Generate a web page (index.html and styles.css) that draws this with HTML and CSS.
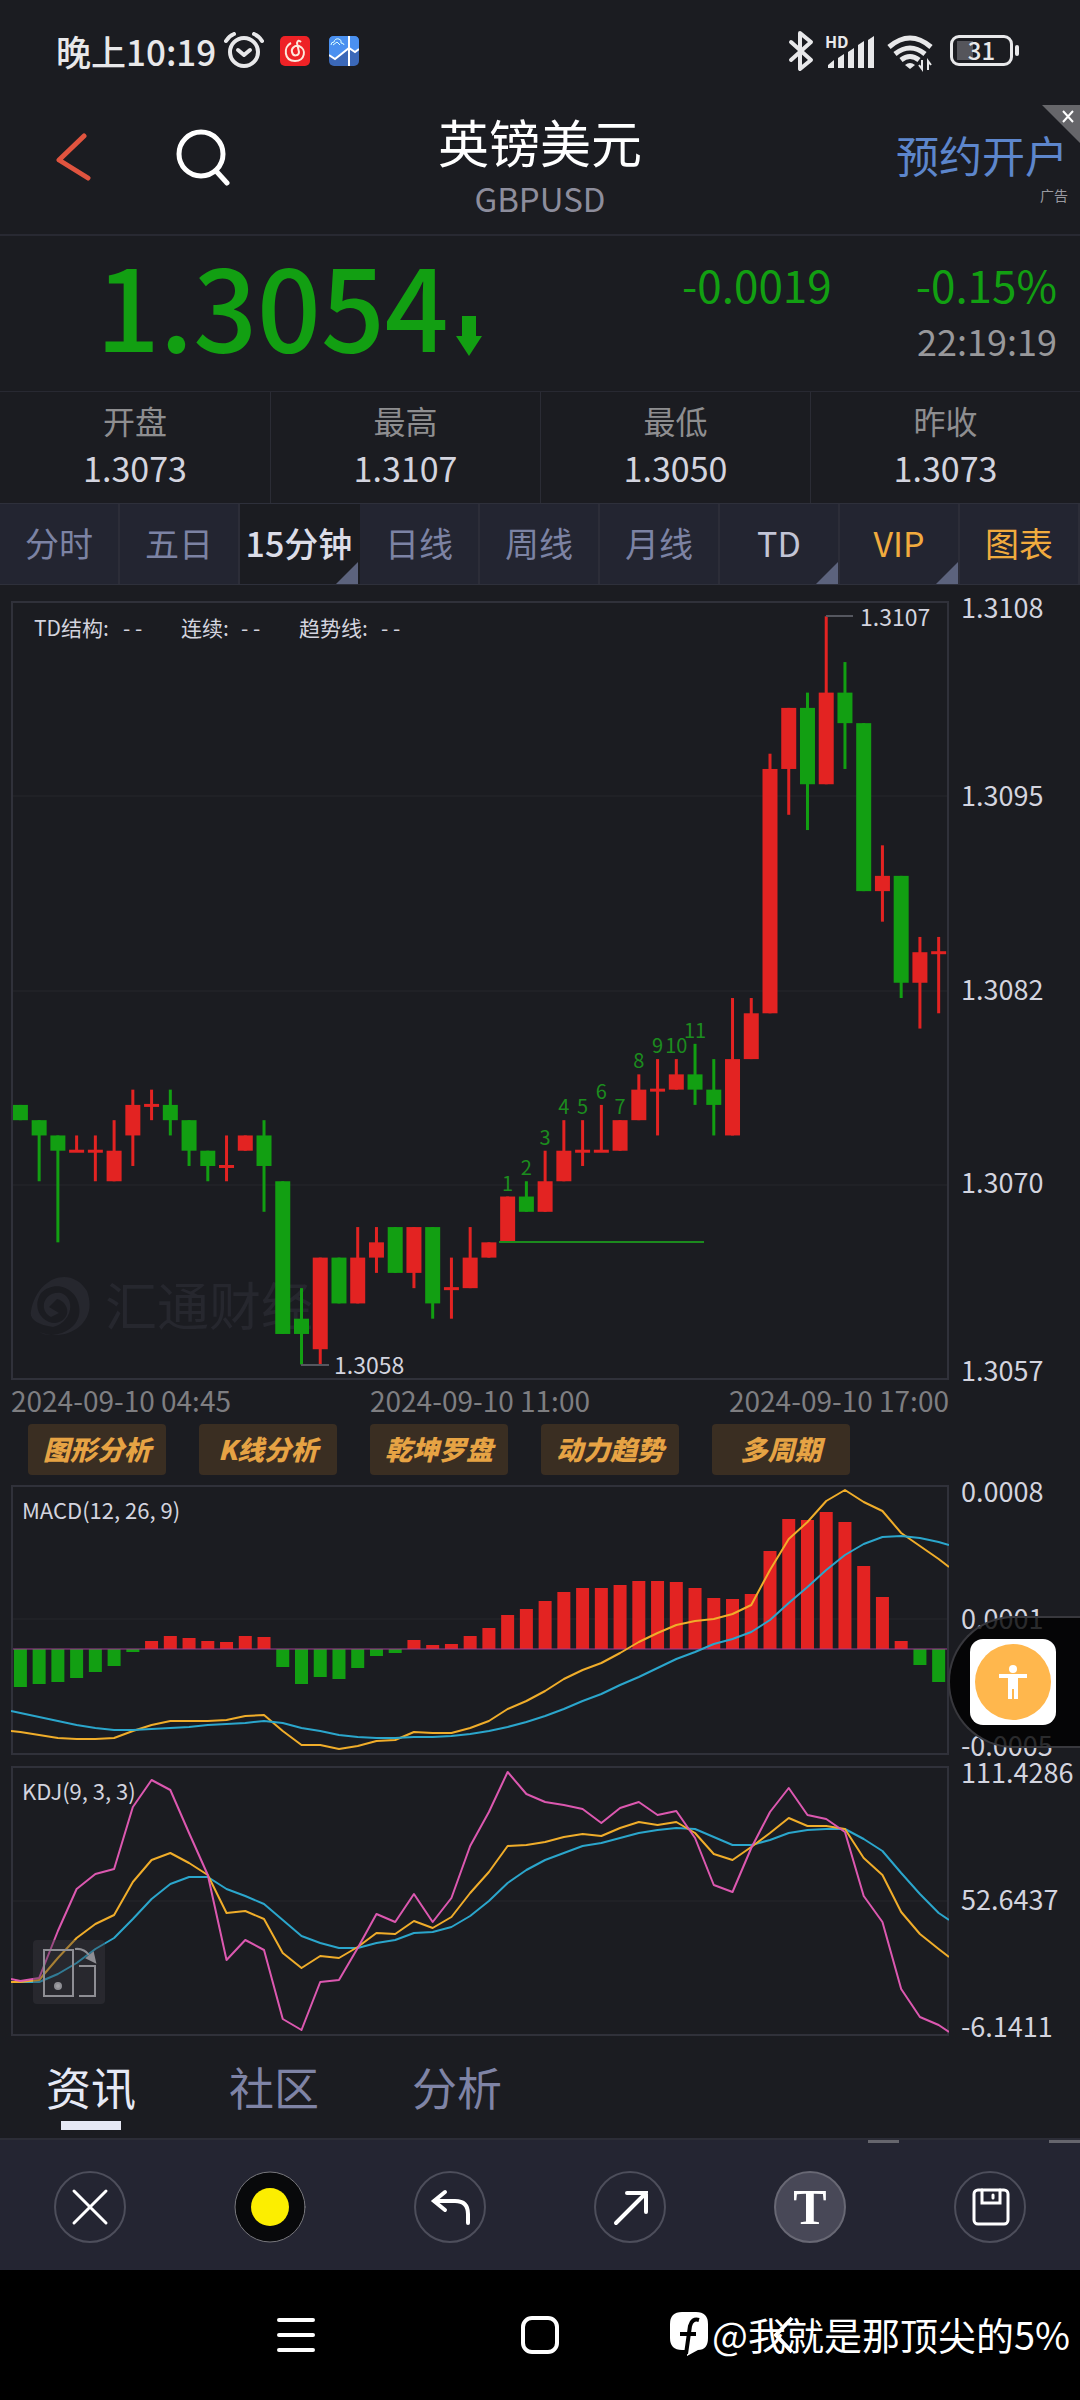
FILE: index.html
```html
<!DOCTYPE html>
<html lang="zh-CN">
<head>
    <meta charset="UTF-8">
    <meta name="viewport" content="width=device-width, initial-scale=1.0">
    <title>英镑美元 GBPUSD</title>
    <link rel="stylesheet" href="styles.css">
</head>
<body>
    <div class="status-bar">
        <div class="status-left">
            <span class="clock">晚上10:19</span>
            <svg class="alarm" width="40" height="38" viewBox="0 0 40 38" fill="none" stroke="#e8e8ea" stroke-linecap="round">
                <circle cx="20" cy="20" r="14" stroke-width="4"/>
                <path d="M14 18l6 5 6-5" stroke-width="4" stroke-linejoin="round"/>
                <path d="M2 9q3-5 8-7M38 9q-3-5-8-7" stroke-width="4"/>
            </svg>
            <svg width="30" height="30" viewBox="0 0 30 30">
                <rect width="30" height="30" rx="5" fill="#ee2226"/>
                <path d="M11 7C3 11 4 25 15 25c10 0 12-12 4-15-5-1-8 3-7 6 1 5 7 4 7 0l-2-9q1-4 4-1" fill="none" stroke="#fde9dd" stroke-width="2"/>
            </svg>
            <svg class="map-app" width="30" height="30" viewBox="0 0 30 30">
                <rect width="30" height="30" rx="5" fill="#3b68b8"/>
                <path d="M0 19l6 4L20 12l6 4 4-3V5q0-5-5-5H5Q0 0 0 5z" fill="#4a90f0"/>
                <path d="M0 19l6 4L20 12l6 4 4-3M20 0v30" fill="none" stroke="#fff" stroke-width="2"/>
                <path d="M2 9q0-3 3-3 1-4 5-3 3 1 2 4 3 0 3 2M4 9l4-3 3 3" fill="none" stroke="#dff" stroke-width="1"/>
            </svg>
        </div>
        <div class="status-right">
            <svg width="148" height="42" viewBox="0 0 148 42" fill="#e8e8ea">
                <path d="M3 12l20 18-11 9V3l11 9L3 30" fill="none" stroke="#e8e8ea" stroke-width="4" stroke-linejoin="round" stroke-linecap="round"/>
                <text x="37" y="18" font-size="16" font-weight="700">HD</text>
                <path d="M40 38v-3l6-5v8zM50 38V28l6-4v14zM60 38V22l6-4v20zM70 38V15l6-4v27zM80 38V10l6-4v32z"/>
                <path d="M101 17q21-18 42 0M107 24q15-12 30 0M113 30q9-7 18 0" fill="none" stroke="#e8e8ea" stroke-width="5"/>
                <path d="M122 39l-5-4q5-4 10 0z"/>
                <path d="M134 30v9l-3-4M140 40v-9l3 4" fill="none" stroke="#e8e8ea" stroke-width="2"/>
            </svg>
            <div class="battery"><span>31</span></div>
        </div>
    </div>

    <header class="header">
        <div class="header-left">
            <button type="button" aria-label="返回">
                <svg width="36" height="50" viewBox="0 0 36 50" fill="none" stroke="#e0543f" stroke-width="5" stroke-linecap="round" stroke-linejoin="round">
                    <path d="M29 4L4 28l29 18"/>
                </svg>
            </button>
            <button type="button" aria-label="搜索">
                <svg width="56" height="58" viewBox="0 0 56 58" fill="none" stroke="#fff" stroke-width="5" stroke-linecap="round">
                    <circle cx="25" cy="26" r="22"/>
                    <path d="M41 44l10 11"/>
                </svg>
            </button>
        </div>
        <div class="title">
            <h1>英镑美元</h1>
            <p>GBPUSD</p>
        </div>
        <div class="header-right">
            <a href="#open">预约开户</a>
            <small>广告</small>
        </div>
        <button type="button" class="ad-close" aria-label="关闭广告">
            <svg width="38" height="38" viewBox="0 0 38 38">
                <path d="M0 0h38v38z" fill="#66666a"/>
                <path d="M21 6l10 11M31 6L21 17" stroke="#fff" stroke-width="2"/>
            </svg>
        </button>
    </header>

    <section class="quote">
        <div class="price">
            <span>1.3054</span>
            <svg width="28" height="42" viewBox="0 0 28 42"><path d="M7 1h14v20h6L14 41 1 21h6z" fill="#129f12"/></svg>
        </div>
        <div class="change">
            <div class="change-row"><span>-0.0019</span><span>-0.15%</span></div>
            <time>22:19:19</time>
        </div>
    </section>

    <dl class="stats">
        <div><dt>开盘</dt><dd>1.3073</dd></div>
        <div><dt>最高</dt><dd>1.3107</dd></div>
        <div><dt>最低</dt><dd>1.3050</dd></div>
        <div><dt>昨收</dt><dd>1.3073</dd></div>
    </dl>

    <nav class="periods">
        <button type="button">分时</button>
        <button type="button">五日</button>
        <button type="button" class="active more">15分钟</button>
        <button type="button">日线</button>
        <button type="button">周线</button>
        <button type="button">月线</button>
        <button type="button" class="light more">TD</button>
        <button type="button" class="gold more">VIP</button>
        <button type="button" class="gold">图表</button>
    </nav>

    <main class="charts">
        <div class="chart-row">
            <svg class="chart" id="kline" viewBox="0 0 938 779">
                <path class="grid-line" d="M0 195H938M0 390H938M0 584H938"/>
                <g fill="#26272e">
                    <path d="M20 710C26 676 60 664 76 690 88 722 56 742 28 731 40 738 64 732 68 714 72 690 46 676 30 692 20 708 32 722 44 722 60 720 60 702 46 698L38 706 48 712 40 716C26 708 34 690 50 692 66 698 60 722 42 726 26 724 18 718 20 710z"/>
                    <text x="94" y="725" font-size="52">汇通财经</text>
                </g>
                <g class="legend">
                    <text x="23" y="35">TD结构:</text><text x="112" y="35">- -</text>
                    <text x="170" y="35">连续:</text><text x="230" y="35">- -</text>
                    <text x="288" y="35">趋势线:</text><text x="370" y="35">- -</text>
                </g>
                <g id="candles"></g>
                <path d="M488 641H693" stroke="#1c8a1e" stroke-width="2"/>
                <path d="M815 15H842M290 764H318" stroke="#55575f" stroke-width="2"/>
                <text class="mark" x="849" y="25">1.3107</text>
                <text class="mark" x="323" y="773">1.3058</text>
                <rect class="frame" x="1" y="1" width="936" height="777"/>
            </svg>
            <div class="axis axis-5">
                <span>1.3108</span><span>1.3095</span><span>1.3082</span><span>1.3070</span><span>1.3057</span>
            </div>
        </div>
        <div class="dates">
            <span>2024-09-10 04:45</span><span>2024-09-10 11:00</span><span>2024-09-10 17:00</span>
        </div>
        <div class="tags">
            <button type="button">图形分析</button>
            <button type="button">K线分析</button>
            <button type="button">乾坤罗盘</button>
            <button type="button">动力趋势</button>
            <button type="button">多周期</button>
        </div>
        <div class="chart-row macd-row">
            <svg class="chart" id="macd" viewBox="0 0 938 270">
                <path class="grid-line" d="M0 134H938"/>
                <g id="bars"></g>
                <path d="M0 164H938" stroke="#a03c94" stroke-width="1"/>
                <text class="name" x="11" y="34">MACD(12, 26, 9)</text>
                <rect class="frame" x="1" y="1" width="936" height="268"/>
            </svg>
            <div class="axis axis-3"><span>0.0008</span><span>0.0001</span><span>-0.0005</span></div>
            <button type="button" class="assist" aria-label="辅助功能">
                <svg width="86" height="86" viewBox="0 0 86 86">
                    <rect width="86" height="86" rx="13" fill="#fff"/>
                    <circle cx="43" cy="43" r="38" fill="#ffb74d"/>
                    <circle cx="43" cy="30" r="4" fill="#fff"/>
                    <path d="M29 35h28v4h-9v21h-4V50h-2v10h-4V39h-9z" fill="#fff"/>
                </svg>
            </button>
        </div>
        <div class="chart-row kdj-row">
            <svg class="chart" id="kdj" viewBox="0 0 938 270">
                <path class="grid-line" d="M0 135H938"/>
                <text class="name" x="11" y="34">KDJ(9, 3, 3)</text>
                <rect class="frame" x="1" y="1" width="936" height="268"/>
            </svg>
            <div class="axis axis-3"><span>111.4286</span><span>52.6437</span><span>-6.1411</span></div>
            <button type="button" class="rotate" aria-label="横屏">
                <svg width="72" height="64" viewBox="0 0 72 64" fill="none" stroke="#8e8e94" stroke-width="2">
                    <path d="M11 10h29v46H11zM46 26h16v30H46M42 9q9-1 14 6"/>
                    <circle cx="25" cy="46" r="3" fill="#a0a0a5"/>
                    <path d="M54 18l6-5 2 9z" fill="#8e8e94"/>
                </svg>
            </button>
        </div>
    </main>

    <nav class="news-tabs">
        <a href="#news" class="active">资讯</a>
        <a href="#community">社区</a>
        <a href="#analysis">分析</a>
    </nav>

    <div class="toolbar">
        <button type="button" aria-label="关闭">
            <svg viewBox="0 0 72 72"><circle class="ring" cx="36" cy="36" r="35"/><path d="M20 20l32 32M52 20L20 52" stroke-width="3"/></svg>
        </button>
        <button type="button" aria-label="颜色">
            <svg viewBox="0 0 72 72"><circle cx="36" cy="36" r="35" fill="#08090b" stroke="#77777c" stroke-width="1"/><circle cx="36" cy="36" r="19" fill="#fcee00" stroke="none"/></svg>
        </button>
        <button type="button" aria-label="撤销">
            <svg viewBox="0 0 72 72"><circle class="ring" cx="36" cy="36" r="35"/><path d="M31 21L20 30l11 9M21 30h20q13 0 13 13v9" stroke-width="4"/></svg>
        </button>
        <button type="button" aria-label="箭头">
            <svg viewBox="0 0 72 72"><circle class="ring" cx="36" cy="36" r="35"/><path d="M22 52l30-30M33 22h19v19" stroke-width="4"/></svg>
        </button>
        <button type="button" aria-label="文字">
            <svg viewBox="0 0 72 72"><circle cx="36" cy="36" r="35" fill="#484857" stroke="#686874" stroke-width="2"/><text x="36" y="53" text-anchor="middle" class="letter">T</text></svg>
        </button>
        <button type="button" aria-label="保存">
            <svg viewBox="0 0 72 72"><circle class="ring" cx="36" cy="36" r="35"/><rect x="20" y="19" width="34" height="34" rx="4" stroke-width="3"/><path d="M28 19v13h18V19M39 24v3" stroke-width="3"/></svg>
        </button>
        <i class="handle handle-left"></i>
        <i class="handle"></i>
    </div>

    <footer class="system-nav">
        <button type="button" aria-label="最近任务">
            <svg width="38" height="38" viewBox="0 0 38 38" stroke="#fff" stroke-width="4" stroke-linecap="round"><path d="M2 4h34M2 19h34M2 34h34"/></svg>
        </button>
        <button type="button" aria-label="主页">
            <svg width="38" height="38" viewBox="0 0 38 38" fill="none" stroke="#fff" stroke-width="4"><rect x="2" y="2" width="34" height="34" rx="9"/></svg>
        </button>
        <button type="button" aria-label="后退">
            <svg width="38" height="38" viewBox="0 0 38 38" fill="none" stroke="#fff" stroke-width="4"><path d="M27 2L11 19l16 17"/></svg>
        </button>
        <div class="author">
            <svg width="38" height="44" viewBox="0 0 38 44">
                <path d="M12 0h14q12 0 12 12v14q0 12-10 12l-11 6v-6h-5Q0 38 0 26V12Q0 0 12 0z" fill="#fff"/>
                <path d="M29 8q-7-2-9 6l-4 28M10 22h16" fill="none" stroke="#000" stroke-width="4"/>
            </svg>
            <span>@我就是那顶尖的5%</span>
        </div>
    </footer>
    <script src="chart.js"></script>
</body>
</html>
```

FILE: styles.css
```css
* {
    box-sizing: border-box;
}
body {
    margin: 0;
    background: #1b1c21;
    color: #d3d4df;
    font-family: "Noto Sans CJK SC", "Noto Sans", sans-serif;
    font-size: 27px;
}
h1, p, dl, dd {
    margin: 0;
}
button {
    padding: 0;
    border: 0;
    background: none;
    color: inherit;
    font: inherit;
}
a {
    text-decoration: none;
}
svg {
    display: block;
}

/* status bar */
.status-bar {
    display: flex;
    justify-content: space-between;
    align-items: center;
    height: 105px;
    padding: 0 67px 4px 56px;
    color: #e8e8ea;
}
.status-left, .status-right {
    display: flex;
    align-items: center;
}
.clock {
    font-size: 35px;
    font-weight: 500;
}
.alarm {
    margin: 0 16px 0 8px;
}
.map-app {
    margin-left: 19px;
}
.battery {
    position: relative;
    width: 63px;
    height: 31px;
    margin-left: 14px;
    border: 3px solid #e8e8ea;
    border-radius: 9px;
    background: linear-gradient(#55555b, #55555b) 4px 3px / 16px 19px no-repeat;
    font-size: 24px;
    font-weight: 500;
    line-height: 24px;
    text-align: center;
}
.battery::after {
    content: "";
    position: absolute;
    top: 7px;
    right: -9px;
    width: 4px;
    height: 11px;
    border-radius: 2px;
    background: #e8e8ea;
}

/* header */
.header {
    position: relative;
    display: grid;
    grid-template-columns: 1fr auto 1fr;
    height: 131px;
    border-bottom: 2px solid #282932;
}
.header-left {
    display: flex;
    align-items: center;
    gap: 85px;
    padding: 0 0 26px 55px;
}
.title {
    padding-top: 5px;
    text-align: center;
}
.title h1 {
    color: #fff;
    font-size: 51px;
    font-weight: 400;
    line-height: 62px;
}
.title p {
    color: #8d8d9c;
    font-size: 33px;
    line-height: 52px;
}
.header-right {
    display: flex;
    flex-direction: column;
    align-items: flex-end;
    padding: 20px 12px 0 0;
}
.header-right a {
    color: #5d86cc;
    font-size: 43px;
    line-height: 58px;
}
.header-right small {
    color: #9a9aa0;
    font-size: 14px;
    line-height: 24px;
}
.ad-close {
    position: absolute;
    top: 0;
    right: 0;
}

/* quote */
.quote {
    display: flex;
    justify-content: space-between;
    height: 155px;
    padding: 0 23px 0 96px;
    color: #129f12;
}
.price {
    display: flex;
    align-items: flex-end;
    gap: 6px;
    padding-bottom: 34px;
    font-size: 112px;
    font-weight: 500;
    line-height: 108px;
}
.change {
    padding-top: 19px;
    font-size: 44px;
    line-height: 58px;
    text-align: right;
}
.change-row {
    display: flex;
    gap: 84px;
}
.change time {
    display: block;
    color: #98989b;
    font-size: 36px;
    line-height: 54px;
}

/* open / high / low / close */
.stats {
    display: grid;
    grid-template-columns: repeat(4, 1fr);
    height: 112px;
    border-top: 1px solid #282932;
    text-align: center;
}
.stats div {
    padding-top: 4px;
}
.stats div + div {
    border-left: 1px solid #2b2c35;
}
.stats dt {
    color: #8e8e90;
    font-size: 32px;
    line-height: 48px;
}
.stats dd {
    font-size: 34px;
    line-height: 48px;
}

/* period tabs */
.periods {
    display: grid;
    grid-template-columns: repeat(9, 1fr);
    height: 82px;
    border-top: 1px solid #2e303b;
    border-bottom: 1px solid #2e303b;
}
.periods button {
    position: relative;
    padding-bottom: 3px;
    border-right: 2px solid #2c2d38;
    background: #232531;
    color: #7c83a4;
    font-size: 34px;
    white-space: nowrap;
}
.periods .active {
    border-color: #1b1c21;
    background: #1b1c21;
    color: #dcdde8;
    font-weight: 500;
}
.periods .light {
    color: #c3c5d6;
}
.periods .gold {
    color: #f1ab3e;
}
.periods .more::after {
    content: "";
    position: absolute;
    right: 0;
    bottom: 0;
    border-left: 22px solid transparent;
    border-bottom: 22px solid #5c637d;
}

/* charts */
.charts {
    padding: 16px 0 0 11px;
}
.chart-row {
    position: relative;
    display: grid;
    grid-template-columns: minmax(0, 1fr) 131px;
}
.chart {
    width: 100%;
}
.chart text {
    fill: currentColor;
}
.chart g[fill] text {
    fill: #26272e;
}
.frame {
    fill: none;
    stroke: #30313a;
    stroke-width: 2;
}
.grid-line {
    stroke: #26272d;
}
.legend {
    font-size: 21px;
}
.mark {
    font-size: 23px;
}
.name {
    font-size: 22px;
}
.chart .td-count {
    fill: #1c8c1e;
    font-size: 20px;
    text-anchor: middle;
}
.up {
    fill: #e32322;
}
.down {
    fill: #129f12;
}
.line {
    fill: none;
    stroke-width: 2;
    stroke-linejoin: round;
}
.yellow {
    stroke: #f0ad2a;
}
.blue {
    stroke: #2ba6cc;
}
.pink {
    stroke: #dc58b0;
}
.axis {
    display: grid;
    align-items: center;
    padding: 0 0 4px 12px;
    line-height: 12px;
}
.axis-5 {
    grid-template-rows: 1fr 2fr 2fr 2fr 1fr;
}
.axis-3 {
    grid-template-rows: 1fr 2fr 1fr;
}
.axis span:first-child {
    align-self: start;
}
.axis span:last-child {
    align-self: end;
}
.dates {
    display: flex;
    justify-content: space-between;
    margin-right: 131px;
    color: #7e7e81;
    font-size: 28px;
    line-height: 40px;
}
.tags {
    display: flex;
    gap: 33px;
    padding: 4px 0 10px 17px;
}
.tags button {
    width: 138px;
    height: 51px;
    padding-bottom: 2px;
    border-radius: 4px;
    background: #3a2e22;
    color: #e6a344;
    font-size: 27px;
    font-style: italic;
    font-weight: 900;
}
.kdj-row {
    margin-top: 11px;
}
.assist {
    position: absolute;
    top: 131px;
    right: 0;
    width: 132px;
    height: 132px;
    padding-left: 20px;
    border: 2px solid #38383d;
    border-right: 0;
    border-radius: 66px 0 0 66px;
    background: rgba(0, 0, 0, 0.8);
}
.rotate {
    position: absolute;
    top: 174px;
    left: 22px;
    border-radius: 4px;
    background: rgba(60, 60, 68, 0.4);
}

/* news tabs */
.news-tabs {
    display: flex;
    gap: 93px;
    height: 102px;
    padding: 20px 46px 0;
    font-size: 45px;
    line-height: 62px;
}
.news-tabs a {
    color: #7f84a6;
}
.news-tabs .active {
    color: #e6e9f5;
}
.news-tabs .active::after {
    content: "";
    display: block;
    width: 60px;
    height: 9px;
    margin: 3px auto 0;
    background: #e6e9f5;
}

/* drawing tools */
.toolbar {
    position: relative;
    display: grid;
    grid-template-columns: repeat(6, 1fr);
    place-items: center;
    height: 132px;
    padding-top: 4px;
    border-top: 2px solid #2c2d37;
    background: #242532;
}
.toolbar svg {
    width: 72px;
    height: 72px;
    fill: none;
    stroke: #fff;
    stroke-linecap: round;
}
.toolbar .ring {
    stroke: #4d4e5b;
    stroke-width: 2;
}
.toolbar .letter {
    fill: #fff;
    stroke: none;
    font-family: "Liberation Serif", serif;
    font-size: 50px;
    font-weight: 700;
}
.handle {
    position: absolute;
    top: 0;
    right: 0;
    width: 31px;
    height: 3px;
    background: #66666d;
}
.handle-left {
    right: 181px;
}

/* system navigation */
.system-nav {
    position: relative;
    display: flex;
    justify-content: center;
    gap: 206px;
    height: 130px;
    background: #000;
}
.author {
    position: absolute;
    top: 36px;
    right: 10px;
    display: flex;
    align-items: center;
    gap: 4px;
    color: #fff;
    font-size: 38px;
    line-height: 56px;
}
```

FILE: chart.js
```js
var STEP = 18.74;
var NS = 'http://www.w3.org/2000/svg';

// open, high, low, close in pips above 1.3000
var candles = [
    [75,75,74,74],[74,74,70,73],[73,73,66,72],[72,73,72,72],[72,73,70,72],
    [70,74,70,72],[73,76,71,75],[75,76,74,75],[75,76,73,74],[74,74,71,72],
    [72,72,70,71],[71,73,70,71],[72,73,72,73],[73,74,68,71],[70,70,60,60],
    [61,63,58,60],[59,65,58,65],[65,65,62,62],[62,67,62,65],[65,67,64,66],
    [67,67,64,64],[64,67,63,67],[67,67,61,62],[63,65,61,63],[63,67,63,65],
    [65,66,65,66],[66,69,66,69],[69,70,68,68],[68,72,68,70],[70,74,70,72],
    [72,74,71,72],[72,75,72,72],[72,74,72,74],[74,77,74,76],[76,78,73,76],
    [76,78,76,77],[77,79,75,76],[76,78,73,75],[73,82,73,78],[78,82,78,81],
    [81,98,81,97],[97,101,94,101],[101,102,93,96],[96,107,96,102],[102,104,97,100],
    [100,100,89,89],[89,92,87,90],[90,90,82,83],[83,86,80,85],[85,86,81,85]
];
var macd = [-38,-35,-33,-29,-23,-17,-3,8,13,11,8,7,13,12,-18,-35,-28,-30,-19,-7,-4,9,4,5,13,
    21,34,40,48,57,61,61,64,68,68,67,61,51,50,55,98,130,129,137,127,83,52,8,-16,-33];

// line points measured from the top of the pane, first and last sit on its edges
var dif = [246,247,250,253,254,254,253,246,240,236,236,236,235,231,230,246,260,260,264,261,256,255,247,248,248,243,
    236,224,216,206,194,185,178,168,157,148,140,136,134,129,120,85,54,37,16,5,17,26,48,61,74,82];
var dea = [226,228,232,236,240,243,245,245,244,243,242,240,239,238,236,238,243,246,250,252,253,253,252,252,251,249,
    246,242,237,231,224,216,209,200,192,183,174,167,159,154,147,135,118,102,85,70,59,52,51,53,57,60];
var lineJ = [213,215,212,165,123,108,103,41,14,24,67,109,194,174,184,253,264,216,214,182,148,156,128,156,132,80,
    46,6,28,36,39,43,57,42,36,49,45,72,119,126,82,46,22,49,53,66,130,156,223,251,259,266];
var lineK = [216,216,214,192,172,158,149,116,94,87,97,109,147,145,153,187,202,190,192,181,167,168,155,162,151,127,
    106,80,79,76,71,68,70,62,56,59,56,67,88,94,81,67,52,60,60,63,92,109,146,168,183,191];
var lineD = [216,216,216,208,197,183,172,153,133,118,111,111,123,130,138,154,170,177,182,182,177,174,167,166,161,150,
    135,117,104,94,87,80,77,72,67,64,62,63,71,79,79,74,67,64,63,63,73,85,107,128,147,154];

function add(parent, tag, attrs) {
    var el = document.createElementNS(NS, tag);
    for (var key in attrs) el.setAttribute(key, attrs[key]);
    parent.appendChild(el);
    return el;
}
function centre(i) {
    return 9.4 + i * STEP;
}
function y(pips) {
    return (108 - pips) * 15.27;
}

var group = document.getElementById('candles');
candles.forEach(function (c, i) {
    var open = c[0], high = c[1], low = c[2], close = c[3];
    var cls = close < open ? 'down' : 'up';
    var top = y(Math.max(open, close));
    var height = Math.abs(open - close) * 15.27;
    if (height === 0) {
        top -= 1;
        height = 3;
    }
    add(group, 'rect', {class: cls, x: centre(i) - 1.5, y: y(high), width: 3, height: y(low) - y(high)});
    add(group, 'rect', {class: cls, x: centre(i) - 7.5, y: top, width: 15, height: height});
    if (i >= 26 && i <= 36) {
        add(group, 'text', {class: 'td-count', x: centre(i), y: y(high) - 6}).textContent = i - 25;
    }
});

var bars = document.getElementById('bars');
macd.forEach(function (v, i) {
    add(bars, 'rect', {class: v < 0 ? 'down' : 'up', x: centre(i) - 6.5, y: v < 0 ? 164 : 164 - v, width: 13, height: Math.abs(v)});
});

function drawLine(id, values, colour) {
    var points = values.map(function (v, i) {
        var x = i === 0 ? 0 : i === values.length - 1 ? 938 : centre(i - 1);
        return x + ',' + v;
    });
    add(document.getElementById(id), 'polyline', {class: 'line ' + colour, points: points.join(' ')});
}
drawLine('macd', dif, 'yellow');
drawLine('macd', dea, 'blue');
drawLine('kdj', lineD, 'blue');
drawLine('kdj', lineK, 'yellow');
drawLine('kdj', lineJ, 'pink');
```
